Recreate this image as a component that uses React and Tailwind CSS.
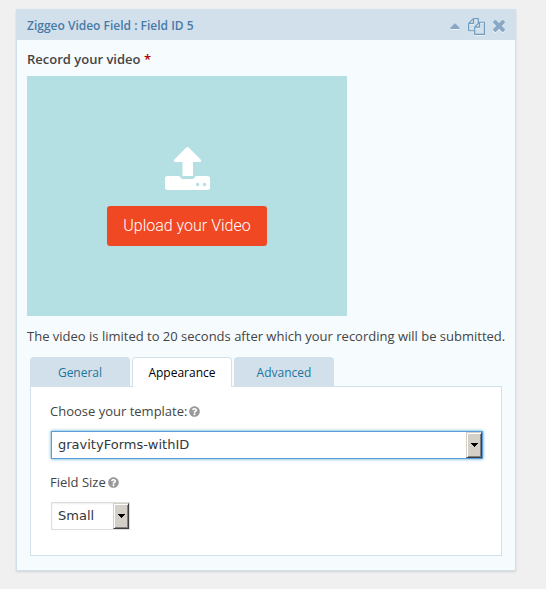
import { FaQuestionCircle } from "react-icons/fa";

function HeaderButton({ label, children }) {
  return (
    <button type="button" aria-label={label} className="flex text-[#8aa8c6] drop-shadow-[0_1px_0_#ffffff80]">
      {children}
    </button>
  );
}

function Tab({ active, children }) {
  return (
    <button
      type="button"
      role="tab"
      aria-selected={!!active}
      className={`h-[30px] w-[100px] rounded-t border border-b-0 border-[#d2e0eb] text-xs ${
        active ? "bg-white text-black" : "bg-[#d2e0eb] text-[#21759b]"
      }`}
    >
      {children}
    </button>
  );
}

function FieldLabel({ htmlFor, children }) {
  return (
    <div className="flex h-5 items-center gap-[2px]">
      <label htmlFor={htmlFor}>{children}</label>
      <FaQuestionCircle className="size-[11px] text-[#999]" aria-hidden="true" />
    </div>
  );
}

function Select({ id, value, focused, className }) {
  return (
    <div
      className={`relative ml-px h-7 border bg-white ${
        focused
          ? "border-[#5b9dd9] shadow-[0_0_3px_#1e8cbecc]"
          : "border-[#ddd] shadow-[inset_0_1px_2px_#00000012]"
      } ${className}`}
    >
      <select
        id={id}
        defaultValue={value}
        className="size-full appearance-none bg-transparent pl-[6px] font-['DejaVu_Sans',sans-serif] text-[13px] text-[#32373c] outline-none"
      >
        <option>{value}</option>
      </select>
      <span className="pointer-events-none absolute inset-y-0 right-0 flex w-4 items-center justify-center border border-t-[#d4d0c8] border-r-[#404040] border-b-[#404040] border-l-[#d4d0c8] bg-[#d4d0c8] shadow-[inset_1px_1px_0_#fff,inset_-1px_-1px_0_#808080]">
        <svg viewBox="0 0 7 4" className="h-1 w-[7px]" shapeRendering="crispEdges" aria-hidden="true">
          <path d="M0 0h7v1H0zM1 1h5v1H1zM2 2h3v1H2zM3 3h1v1H3z" />
        </svg>
      </span>
    </div>
  );
}

export default function App() {
  return (
    <main className="min-h-screen bg-[#f0f0f0] pt-[9px] pr-[30px] pb-[18px] pl-4 font-['Open_Sans',sans-serif] text-[13px] leading-5 text-[#444]">
      <section className="border border-[#d2e0eb] bg-[#f6fbfe] shadow-[0_1px_2px_#0000001f]">
        <header className="flex h-[30px] items-center justify-between bg-[#d2e0eb] px-[10px]">
          <h2 className="pt-px text-xs font-semibold text-[#487aa8]">Ziggeo Video Field : Field ID 5</h2>
          <div className="flex items-center gap-2 pt-[2px]">
            <HeaderButton label="Collapse field">
              <svg viewBox="0 0 10 6" className="h-[6px] w-[10px]" fill="currentColor">
                <path d="M5 0.2 9.6 4.8Q10 6 9 6H1Q0 6 .4 4.8Z" />
              </svg>
            </HeaderButton>
            <HeaderButton label="Duplicate field">
              <svg viewBox="0 0 1792 1792" className="size-[17px] text-[#6f9dbd]" fill="currentColor">
                <path d="M1696 384q40 0 68 28t28 68v1216q0 40-28 68t-68 28h-960q-40 0-68-28t-28-68v-288h-544q-40 0-68-28t-28-68v-672q0-40 20-88t48-76l408-408q28-28 76-48t88-20h416q40 0 68 28t28 68v328q68-40 128-40h416zm-544 213l-299 299h299v-299zm-640-384l-299 299h299v-299zm196 647l316-316v-416h-384v416q0 40-28 68t-68 28h-416v640h512v-256q0-40 20-88t48-76zm956 804v-1152h-384v416q0 40-28 68t-68 28h-416v640h896z" />
              </svg>
            </HeaderButton>
            <HeaderButton label="Delete field">
              <svg viewBox="302 366 1188 1188" className="size-3" fill="currentColor">
                <path d="M1490 1322q0 40-28 68l-136 136q-28 28-68 28t-68-28l-294-294-294 294q-28 28-68 28t-68-28l-136-136q-28-28-28-68t28-68l294-294-294-294q-28-28-28-68t28-68l136-136q28-28 68-28t68 28l294 294 294-294q28-28 68-28t68 28l136 136q28 28 28 68t-28 68l-294 294 294 294q28 28 28 68z" />
              </svg>
            </HeaderButton>
          </div>
        </header>

        <div className="px-[10px] pt-[9px] pb-[14px]">
          <h3 className="font-semibold">
            Record your video <span className="text-[#b00000]">*</span>
          </h3>
          <div className="mt-[7px] flex h-60 w-full max-w-80 flex-col items-center bg-[#b4e0e3] pt-[71px]">
            <svg viewBox="0 0 45 43" className="h-[43px] w-[45px]" fill="#fff" aria-hidden="true">
              <path d="M22.5 0Q23.3 0 24 .8L35.6 12.6Q37 14.6 35 15H28V29H17.500V15H10Q8 14.600 9.400 12.600L21 .8Q21.700 0 22.500 0Z" />
              <path
                fillRule="evenodd"
                d="M2.500 29H13.500Q15 29 15.500 30.500T17.500 32H27.500Q29 32 29.500 30.500T31.500 29H42.500Q45 29 45 31.500V40.500Q45 43 42.500 43H2.500Q0 43 0 40.500V31.500Q0 29 2.500 29ZM32.600 35.800a1.700 1.700 0 1 0 .01 3.400a1.700 1.700 0 1 0-.01-3.400ZM39.600 35.800a1.700 1.700 0 1 0 .01 3.400a1.700 1.700 0 1 0-.01-3.400Z"
              />
            </svg>
            <button
              type="button"
              className="mt-4 h-10 w-40 rounded-[3px] bg-[#ef4823] font-['Roboto',sans-serif] text-base font-light text-white"
            >
              Upload your Video
            </button>
          </div>
          <p className="mt-[10px] -mr-2">
            The video is limited to 20 seconds after which your recording will be submitted.
          </p>

          <div className="mt-[11px] mr-[3px] ml-[3px]">
            <div role="tablist" className="relative -mb-px flex gap-[2px]">
              <Tab>General</Tab>
              <Tab active>Appearance</Tab>
              <Tab>Advanced</Tab>
            </div>
            <div role="tabpanel" className="border border-[#d2e0eb] bg-white pt-[14px] pr-[18px] pb-[25px] pl-[19px]">
              <FieldLabel htmlFor="template">Choose your template:</FieldLabel>
              <Select id="template" value="gravityForms-withID" focused className="mt-[10px] mb-[13px]" />
              <FieldLabel htmlFor="size">Field Size</FieldLabel>
              <Select id="size" value="Small" className="mt-[10px] w-[79px]" />
            </div>
          </div>
        </div>
      </section>
    </main>
  );
}
